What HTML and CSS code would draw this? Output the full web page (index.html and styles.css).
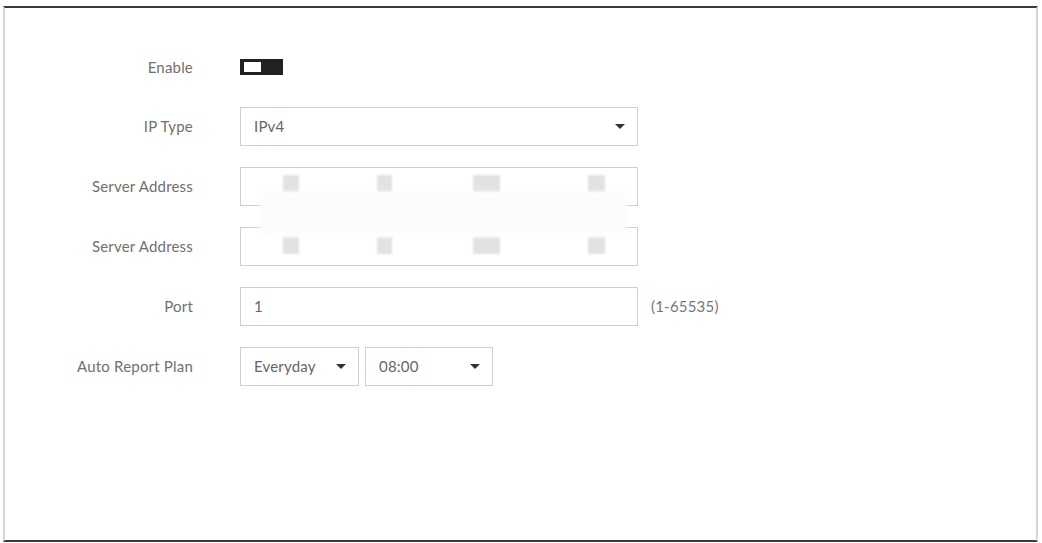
FILE: index.html
```html
<!DOCTYPE html>
<html lang="en">
<head>
  <meta charset="UTF-8" />
  <title>Auto Register</title>
  <link rel="stylesheet" href="styles.css">
</head>
<body>
  <div class="panel">
    <form class="form">
      <label class="lbl">Enable</label>
      <div class="ctl">
        <span class="toggle"><span class="knob"></span></span>
      </div>

      <label class="lbl">IP Type</label>
      <div class="ctl">
        <div class="select wide"><span>IPv4</span><i class="caret"></i></div>
      </div>

      <label class="lbl">Server Address</label>
      <div class="ctl">
        <div class="field wide"></div>
      </div>

      <label class="lbl">Server Address</label>
      <div class="ctl">
        <div class="field wide"></div>
      </div>

      <label class="lbl">Port</label>
      <div class="ctl">
        <div class="field wide"><span>1</span></div>
        <span class="hint">(1-65535)</span>
      </div>

      <label class="lbl">Auto Report Plan</label>
      <div class="ctl">
        <div class="select day"><span>Everyday</span><i class="caret"></i></div>
        <div class="select time"><span>08:00</span><i class="caret"></i></div>
      </div>
    </form>

    <!-- masked address values -->
    <div class="mask">
      <span class="dot" style="left:283px;top:175px;width:16px"></span>
      <span class="dot" style="left:377px;top:175px;width:15px"></span>
      <span class="dot" style="left:473px;top:175px;width:27px"></span>
      <span class="dot" style="left:588px;top:175px;width:17px"></span>
      <span class="dot" style="left:283px;top:237px;width:16px"></span>
      <span class="dot" style="left:377px;top:237px;width:15px"></span>
      <span class="dot" style="left:473px;top:237px;width:27px"></span>
      <span class="dot" style="left:588px;top:237px;width:17px"></span>
      <span class="haze"></span>
    </div>
  </div>
</body>
</html>
```

FILE: styles.css
```css
body {
  margin: 0;
  background: #fff;
  font-family: Lato, "Open Sans", sans-serif;
  font-size: 15px;
  letter-spacing: 0.2px;
  color: #666;
}
.panel {
  position: relative;
  margin: 6px 0 0 3px;
  width: 1031px;
  height: 532px;
  border-top: 2px solid #3a3a3a;
  border-bottom: 2px solid #3a3a3a;
  border-left: 2px solid #d6d6d6;
  border-right: 2px solid #d6d6d6;
}
.form {
  display: grid;
  grid-template-columns: 188px 1fr;
  grid-template-rows: 38px repeat(5, 40px);
  column-gap: 47px;
  row-gap: 20px;
  padding-top: 40px;
}
.lbl {
  display: flex;
  align-items: center;
  justify-content: flex-end;
  color: #707070;
}
.ctl {
  display: flex;
  align-items: center;
  gap: 6px;
}
.toggle {
  display: block;
  width: 43px;
  height: 16px;
  background: #222;
  position: relative;
}
.knob {
  position: absolute;
  left: 4px;
  top: 3px;
  width: 17px;
  height: 10px;
  background: #fff;
}
.field, .select {
  box-sizing: border-box;
  height: 39px;
  border: 1px solid #cfcfcf;
  display: flex;
  align-items: center;
  padding: 0 13px;
  color: #666;
}
.wide { width: 398px; }
.select { justify-content: space-between; }
.day { width: 119px; }
.time { width: 128px; }
.caret {
  width: 0;
  height: 0;
  border-left: 5px solid transparent;
  border-right: 5px solid transparent;
  border-top: 5px solid #333;
  margin-right: -1px;
}
.hint {
  margin-left: 7px;
  color: #777;
}
.mask {
  position: absolute;
  left: -5px;
  top: -8px;
  width: 0;
  height: 0;
}
.dot {
  position: absolute;
  height: 17px;
  background: #e2e2e2;
  filter: blur(1px);
}
.haze {
  position: absolute;
  left: 260px;
  top: 193px;
  width: 367px;
  height: 42px;
  background: #fcfcfc;
  filter: blur(3px);
}
```
